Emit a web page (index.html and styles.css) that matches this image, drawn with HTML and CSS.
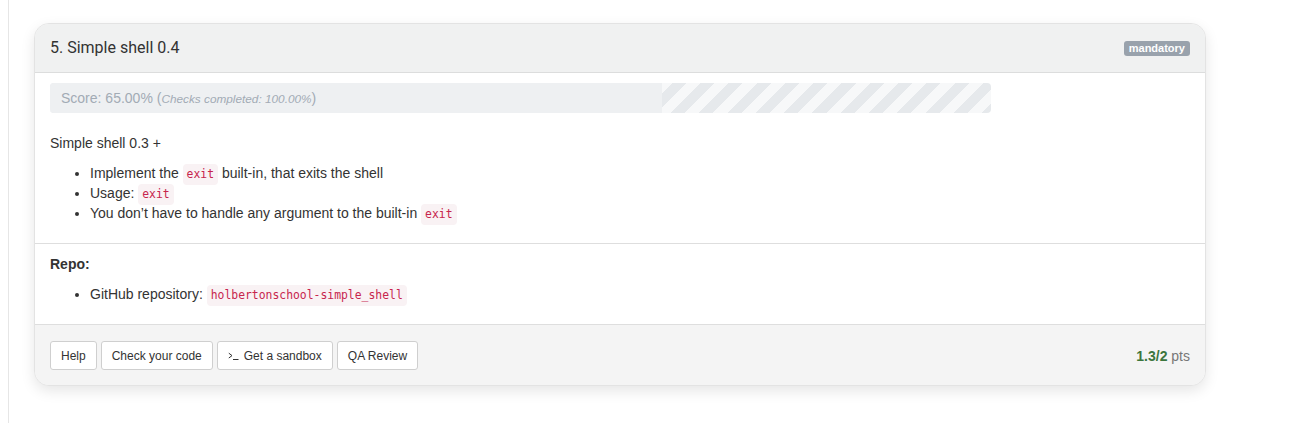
FILE: index.html
```html
<!DOCTYPE html>
<html lang="en">
<head>
<meta charset="utf-8">
<title>5. Simple shell 0.4</title>
<link rel="stylesheet" href="styles.css">
</head>
<body>
<main class="page">
  <section class="task">
    <header class="task-head">
      <h3 class="task-title">5. Simple shell 0.4</h3>
      <span class="badge">mandatory</span>
    </header>
    <div class="task-body">
      <div class="progress">
        <div class="progress-fill" style="width: 65%"></div>
        <div class="progress-text">Score: 65.00% (<em>Checks completed: 100.00%</em>)</div>
      </div>
      <p>Simple shell 0.3 +</p>
      <ul>
        <li>Implement the <code>exit</code> built-in, that exits the shell</li>
        <li>Usage: <code>exit</code></li>
        <li>You don’t have to handle any argument to the built-in <code>exit</code></li>
      </ul>
    </div>
    <div class="task-repo">
      <p class="repo-label">Repo:</p>
      <ul>
        <li>GitHub repository: <code>holbertonschool-simple_shell</code></li>
      </ul>
    </div>
    <footer class="task-foot">
      <div class="btns">
        <button class="btn">Help</button>
        <button class="btn">Check your code</button>
        <button class="btn"><svg class="term" width="11" height="9" viewBox="0 0 11 9"><polyline points="0.8,2.2 4,4.6 0.8,7" fill="none" stroke="#333" stroke-width="1"/><line x1="5" y1="8.5" x2="10.5" y2="8.5" stroke="#333" stroke-width="1"/></svg>Get a sandbox</button>
        <button class="btn">QA Review</button>
      </div>
      <div class="pts"><strong>1.3/2</strong> pts</div>
    </footer>
  </section>
</main>
</body>
</html>
```
FILE: styles.css
```css
* { box-sizing: border-box; }
html, body { height: 100%; }
body {
  margin: 0;
  background: #fff;
  font-family: "Liberation Sans", Arial, sans-serif;
  font-size: 14px;
  line-height: 20px;
  color: #333;
}
.page {
  margin-left: 8px;
  min-height: 100%;
  border-left: 1px solid #e6e6e6;
  padding: 23px 0 0 25px;
}
.task {
  width: 1172px;
  background: #fff;
  border: 1px solid #e3e3e3;
  border-radius: 15px;
  overflow: hidden;
  box-shadow: 0 5px 14px rgba(0, 0, 0, 0.1);
}
.task-head {
  display: flex;
  align-items: center;
  justify-content: space-between;
  background: #f0f1f1;
  border-bottom: 1px solid #dcdddd;
  padding: 14px 15px 14px 15px;
}
.task-title {
  margin: 0;
  font-family: Roboto, "Liberation Sans", sans-serif;
  font-size: 16px;
  font-weight: 400;
  line-height: 20px;
  color: #333;
}
.badge {
  background: #99a2ac;
  color: #fff;
  font-size: 11px;
  font-weight: 700;
  line-height: 11px;
  padding: 2px 5px 2px;
  border-radius: 3px;
}
.task-body {
  padding: 10px 15px 10px;
  border-bottom: 1px solid #dedede;
}
.progress {
  position: relative;
  width: 941px;
  height: 30px;
  border-radius: 4px;
  overflow: hidden;
  background: repeating-linear-gradient(135deg, #e6e9ec 0 10px, #f7f8f9 10px 20px);
  margin-bottom: 20px;
}
.progress-fill {
  height: 100%;
  background: #eef0f2;
}
.progress-text {
  position: absolute;
  left: 11px;
  top: 5px;
  color: #a2abb5;
  font-size: 14px;
  line-height: 20px;
}
.progress-text em {
  font-size: 11.8px;
}
p { margin: 0 0 10px; }
ul {
  margin: 0 0 10px;
  padding-left: 40px;
}
code {
  font-family: "DejaVu Sans Mono", "Liberation Mono", monospace;
  font-size: 11.4px;
  line-height: 1;
  color: #c7254e;
  background: #f9f2f4;
  padding: 3px 4px 4px;
  border-radius: 4px;
}
.task-repo {
  padding: 10px 15px 10px;
  border-bottom: 1px solid #dedede;
}
.repo-label { font-weight: 700; }
.task-foot {
  display: flex;
  align-items: center;
  justify-content: space-between;
  background: #f4f4f4;
  padding: 16px 15px 15px;
}
.btns { display: flex; gap: 4px; }
.btn {
  display: inline-flex;
  align-items: center;
  gap: 5px;
  font-family: "Liberation Sans", Arial, sans-serif;
  font-size: 12px;
  line-height: 18px;
  color: #333;
  background: #fff;
  border: 1px solid #cfcfcf;
  border-radius: 3px;
  padding: 4px 10px;
  height: 29px;
}
.term { display: block; }
.pts {
  font-size: 14px;
  color: #777;
}
.pts strong { color: #3c763d; }
```
